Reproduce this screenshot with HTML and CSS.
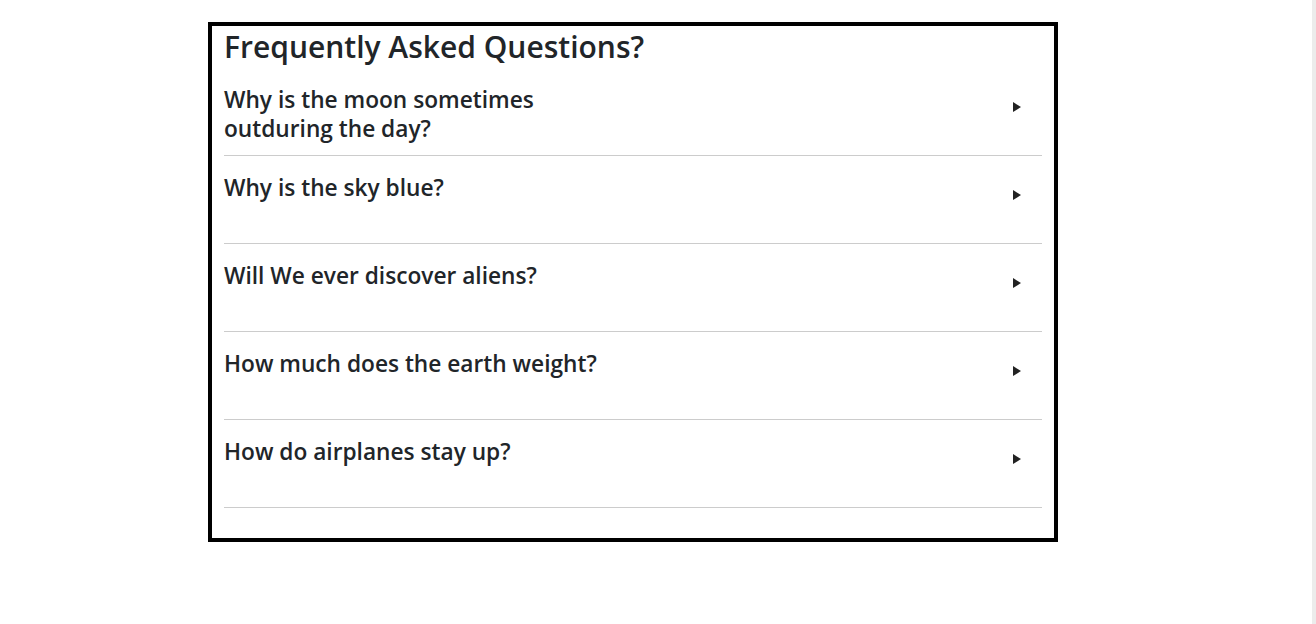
FILE: index.html
```html
<!DOCTYPE html>
<html lang="en">
<head>
<meta charset="utf-8">
<title>FAQ</title>
<link rel="stylesheet" href="styles.css">
</head>
<body>
<div class="faq">
  <h1 class="faq-title">Frequently Asked Questions?</h1>
  <div class="faq-list">
    <div class="faq-item">
      <h2 class="faq-q">Why is the moon sometimes<br>outduring the day?</h2>
      <span class="faq-arrow"></span>
    </div>
    <div class="faq-item">
      <h2 class="faq-q">Why is the sky blue?</h2>
      <span class="faq-arrow"></span>
    </div>
    <div class="faq-item">
      <h2 class="faq-q">Will We ever discover aliens?</h2>
      <span class="faq-arrow"></span>
    </div>
    <div class="faq-item">
      <h2 class="faq-q">How much does the earth weight?</h2>
      <span class="faq-arrow"></span>
    </div>
    <div class="faq-item">
      <h2 class="faq-q">How do airplanes stay up?</h2>
      <span class="faq-arrow"></span>
    </div>
  </div>
</div>
</body>
</html>
```
FILE: styles.css
```css
html, body {
  margin: 0;
  padding: 0;
  background: #fff;
}
body {
  font-family: "Open Sans", sans-serif;
  color: #212529;
  border-right: 4px solid #ececec;
  min-height: 624px;
  box-sizing: border-box;
}
.faq {
  width: 850px;
  box-sizing: border-box;
  margin: 22px 0 0 208px;
  border: 4px solid #000;
  padding: 0 12px 30px 12px;
}
.faq-title {
  margin: 0;
  font-size: 30px;
  font-weight: 600;
  line-height: 42px;
}
.faq-item {
  height: 88px;
  box-sizing: border-box;
  border-bottom: 1px solid #cccccc;
  display: flex;
  justify-content: space-between;
  align-items: flex-start;
  padding-top: 17px;
}
.faq-q {
  margin: 0;
  font-size: 22.7px;
  font-weight: 600;
  line-height: 29px;
}
.faq-arrow {
  width: 0;
  height: 0;
  border-left: 8px solid #222;
  border-top: 5px solid transparent;
  border-bottom: 5px solid transparent;
  margin-top: 17px;
  margin-right: 21px;
}
```
